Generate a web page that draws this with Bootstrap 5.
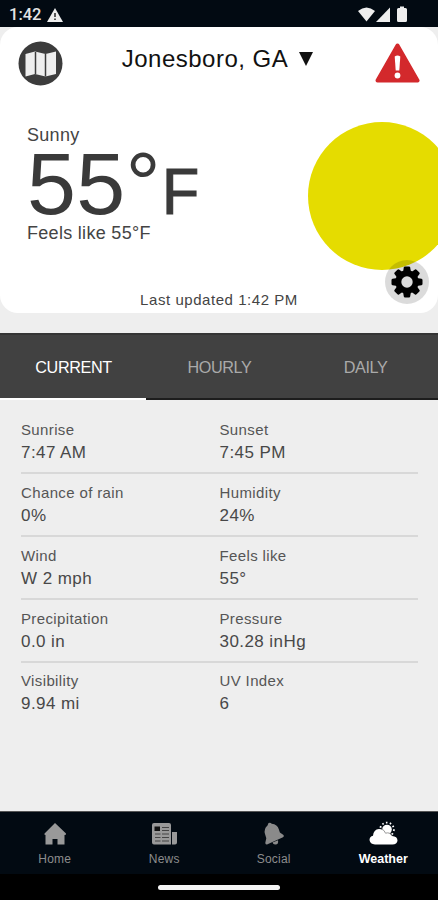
<!DOCTYPE html>
<html lang="en">
<head>
<meta charset="utf-8">
<meta name="viewport" content="width=device-width, initial-scale=1">
<title>Weather</title>
<link href="https://cdn.jsdelivr.net/npm/bootstrap@5.3.0/dist/css/bootstrap.min.css" rel="stylesheet">
<style>
body{font-family:"Liberation Sans",Arial,sans-serif;background:#eee;color:#444;height:900px;overflow:hidden}
svg{display:block;flex:none}
.status{height:27px;background:#020a12;padding:2px 30px 0 9px;color:#e4e4e4}
.clock{font:500 16.5px/24px Roboto,sans-serif;width:38px}
.hero{height:286px;border-radius:18px;position:relative;overflow:hidden}
.hero-bar{height:72px;padding:0 18px}
.place{font-size:24px;letter-spacing:.5px;color:#111;line-height:30px;padding:0 3px 8px 0;gap:11px}
.now{padding:26px 0 0 27px}
.cond{font-size:18px;line-height:20px;letter-spacing:.3px}
.temp{font-size:88px;line-height:78px;color:#3a3a3a;letter-spacing:.3px;height:78px}
.unit{font-size:64px;-webkit-text-stroke:1.2px #3a3a3a;margin-left:-1px;display:inline-block;transform:scaleX(.95);transform-origin:right}
.sun{position:absolute;left:308px;top:95px;width:148px;height:148px;background:#e5dc00}
.gear{position:absolute;left:385px;top:233px;width:44px;height:44px;background:rgba(0,0,0,.14)}
.updated{position:absolute;left:0;right:0;top:263px;font-size:15px;line-height:20px;letter-spacing:.55px}
.tabs{height:67px;margin-top:20px;background:#414141;border-top:2px solid #353535}
.tabs .nav-link{height:65px;border-radius:0;padding:0 0 0 1px;line-height:64px;font-size:16.2px;letter-spacing:-.4px;color:#aaa;border-bottom:2px solid #1d1d1d}
.tabs .nav-link.active{color:#fff;border-bottom:2px solid #fff}
.facts{height:411px;padding:11.5px 20px 0 21px}
.fact-row{height:62.8px;border-bottom:2px solid #d8d8d8;padding-top:7.7px}
.fact-row:last-child{border:0}
.lbl{font-size:15px;line-height:22px;letter-spacing:.37px;color:#555}
.val{font-size:17px;line-height:24px;letter-spacing:.43px;color:#484848}
.dock{height:63px;background:#020a12;border-top:1px solid #555;padding-top:8px}
.dock .nav-link{padding:0;color:#8d8d8d;font-size:12px;line-height:16px;letter-spacing:.2px}
.dock .nav-link svg{height:28px;width:32px;margin-bottom:3px}
.dock .nav-link.active{color:#fff;font-weight:700;font-size:12.5px;letter-spacing:0}
.gesture{height:26px;background:#000}
.pill{width:122px;height:5px;background:#f5f5f5}
</style>
<script src="https://cdn.jsdelivr.net/npm/bootstrap@5.3.0/dist/js/bootstrap.bundle.min.js"></script>
</head>
<body>
<header class="status d-flex align-items-center">
  <span class="clock">1:42</span>
  <svg width="16" height="14" viewBox="0 0 16 14"><path d="M8 0 16 14H0Z" fill="#eee"/><path d="M7.2 5h1.6v4H7.2zM7.2 10.4h1.6V12H7.2z" fill="#333"/></svg>
  <svg class="ms-auto" width="51" height="17" viewBox="0 0 51 17" fill="#eee"><path d="M1 5Q9.500-2 18 5L9.500 15.500Z"/><path d="M19 16 33 1.500V16Z"/><path d="M43 .5h4V2h1.500q1.500 0 1.500 1.500v11q0 1.500-1.500 1.500h-7Q40 16 40 14.500v-11Q40 2 41.500 2H43Z"/></svg>
</header>
<main>
  <section class="hero bg-white">
    <div class="hero-bar d-flex align-items-center justify-content-between">
      <svg width="45" height="45" viewBox="0 0 45 45"><circle cx="22.500" cy="22.500" r="22" fill="#3c3c3c"/><path d="m7.500 13 9.500-2.500L27.500 13l10.500-2.500V33l-10.500 2.500L17 33l-9.500 2.500Z" fill="#eee"/><path d="M17.500 11v22M27.500 13v22.500" stroke="#3c3c3c" stroke-width="1.500"/></svg>
      <div class="place d-flex align-items-center">Jonesboro, GA<svg width="14" height="14" viewBox="0 0 14 14"><path d="M0 0h14L7 14Z" fill="#111"/></svg></div>
      <svg width="45" height="40" viewBox="0 0 45 40"><path d="M22.500 2.500 42.500 37.500h-40Z" fill="#d3292c" stroke="#d3292c" stroke-width="4" stroke-linejoin="round"/><path d="M19.700 13.500q2.800-2 5.600 0l-1 14h-3.600Z" fill="#fff"/><circle cx="22.500" cy="32.500" r="2.900" fill="#fff"/></svg>
    </div>
    <div class="now">
      <div class="cond">Sunny</div>
      <div class="temp text-nowrap">55°<span class="unit">F</span></div>
      <div class="cond">Feels like 55°F</div>
    </div>
    <div class="sun rounded-circle"></div>
    <div class="gear rounded-circle d-flex align-items-center justify-content-center">
      <svg width="32" height="32" viewBox="-16 -16 32 32"><g fill="#000"><g id="teeth"><path id="t" d="M-4-9.500-3.200-14.500q.2-1 1.200-1h4q1 0 1.200 1L4-9.500v19l-.8 5q-.2 1-1.200 1h-4q-1 0-1.200-1L-4 9.500Z"/><use href="#t" transform="rotate(90)"/></g><use href="#teeth" transform="rotate(45)"/></g><circle r="8.700" fill="none" stroke="#000" stroke-width="6"/><circle r="5.700" fill="#dcdcdc"/></svg>
    </div>
    <div class="updated text-center">Last updated 1:42 PM</div>
  </section>
  <nav class="tabs nav nav-fill flex-nowrap">
    <a class="nav-link active col-4" href="#">CURRENT</a>
    <a class="nav-link col-4" href="#">HOURLY</a>
    <a class="nav-link col-4" href="#">DAILY</a>
  </nav>
  <section class="facts">
    <div class="fact-row row g-0"><div class="col-6"><div class="lbl">Sunrise</div><div class="val">7:47 AM</div></div><div class="col-6"><div class="lbl">Sunset</div><div class="val">7:45 PM</div></div></div>
    <div class="fact-row row g-0"><div class="col-6"><div class="lbl">Chance of rain</div><div class="val">0%</div></div><div class="col-6"><div class="lbl">Humidity</div><div class="val">24%</div></div></div>
    <div class="fact-row row g-0"><div class="col-6"><div class="lbl">Wind</div><div class="val">W 2 mph</div></div><div class="col-6"><div class="lbl">Feels like</div><div class="val">55°</div></div></div>
    <div class="fact-row row g-0"><div class="col-6"><div class="lbl">Precipitation</div><div class="val">0.0 in</div></div><div class="col-6"><div class="lbl">Pressure</div><div class="val">30.28 inHg</div></div></div>
    <div class="fact-row row g-0"><div class="col-6"><div class="lbl">Visibility</div><div class="val">9.94 mi</div></div><div class="col-6"><div class="lbl">UV Index</div><div class="val">6</div></div></div>
  </section>
</main>
<footer>
  <nav class="dock nav nav-fill flex-nowrap">
    <a class="nav-link col-3 d-flex flex-column align-items-center" href="#"><svg viewBox="0 0 32 28"><path d="M16 3 27 13.500q.5 1.500-1.500 1.500V24.500h-7V19h-5v5.500h-7V15Q5 15 5.500 13.500Z" fill="#999"/></svg>Home</a>
    <a class="nav-link col-3 d-flex flex-column align-items-center" href="#"><svg viewBox="0 0 32 28"><path d="M6 3h15q2 0 2 2v19.500H6q-2 0-2-2V5q0-2 2-2ZM24 12h5v10.500q0 2-2 2h-3Z" fill="#999"/><path d="M6.500 6.500H12V11H6.500z" fill="#111"/><path d="M14 7.500h7M14 10.500h7M7 14h5.500M14 14h7M7 17.500h5.500M14 17.500h7M7 21h5.500M14 21h7" stroke="#444" stroke-width="1.100"/></svg>News</a>
    <a class="nav-link col-3 d-flex flex-column align-items-center" href="#"><svg viewBox="0 0 32 28"><path d="M10.500 3q2-1 3.200.8 5.800.7 7 5.200l1.200 3.500 3.600 2.500q1 1.500-.5 2.200L9 24.500q-1.800.3-1.700-1.700l1-4.600L7 14q-1.500-5 2.500-8.500Z" fill="#8a8a8a"/><path d="m14.500 22.500 5.500-2.200q.8 4.200-2.500 4.200-2.200.3-3-2Z" fill="#8a8a8a"/></svg>Social</a>
    <a class="nav-link active col-3 d-flex flex-column align-items-center" href="#"><svg viewBox="0 0 32 28" fill="#fff"><circle cx="20" cy="9.500" r="6.900" fill="none" stroke="#fff" stroke-width="1.800" stroke-dasharray="1.600 2.300"/><circle cx="20" cy="9.500" r="4.800"/><path d="M8 24.500q-5-.3-5.500-4.500 0-3.500 3.500-4.300Q6.500 9.500 12 9q4.500 0 6.300 4.300 4.700-1.500 6.700 2.700 5.500.3 5.500 4.700-.5 3.500-5 3.800Z"/><path d="M14.500 9q3 1 4 4.200 4.300-1.400 6.500 2.600" fill="none" stroke="#999"/></svg>Weather</a>
  </nav>
  <div class="gesture d-flex justify-content-center align-items-center"><div class="pill rounded-pill"></div></div>
</footer>
</body>
</html>
